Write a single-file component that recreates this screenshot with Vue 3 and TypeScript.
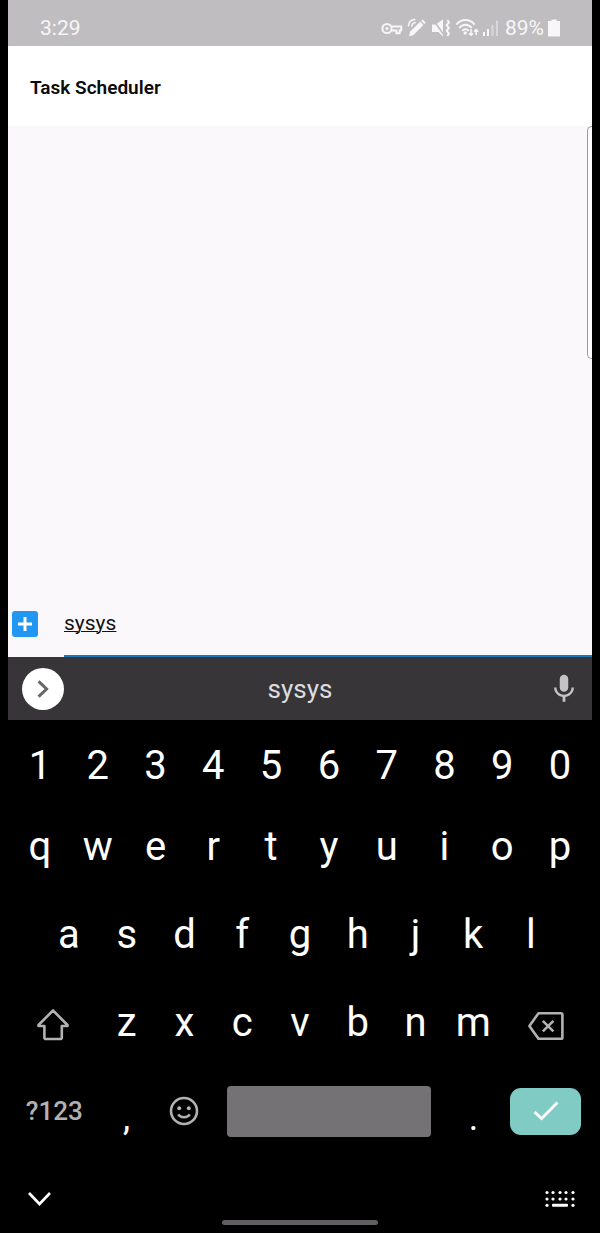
<script setup lang="ts">
import { ref } from 'vue'

const task = ref<string>('sysys')

const digits: string[] = [...'1234567890']
const topLetters: string[] = [...'qwertyuiop']
const homeLetters: string[] = [...'asdfghjkl']
const bottomLetters: string[] = [...'zxcvbnm']

const dotColumns: number[] = [3, 9, 16, 22, 29]

function type(char: string): void {
  task.value += char
}

function erase(): void {
  task.value = task.value.slice(0, -1)
}
</script>

<template>
  <div class="phone">
    <div class="status">
      <span class="clock">3:29</span>
      <div class="indicators">
        <svg width="22" height="20" viewBox="0 0 22 20" aria-hidden="true">
          <circle cx="6" cy="10.5" r="4.6" class="line" />
          <circle cx="6" cy="10.5" r="1.5" class="solid" />
          <path d="M10.5 8.4H20.2V12.4H18.6V15.2H15.4V12.4H10.5" class="line" />
        </svg>
        <svg width="20" height="20" viewBox="0 0 20 20" aria-hidden="true">
          <path d="M2 18.6L3.2 13.4L13.2 3.8L16.4 7L6.6 17Z M14.2 2.9L15.6 1.6L18.8 4.8L17.4 6.1Z" class="solid" />
          <path d="M1.4 8.4C1.6 4.4 4.4 1.8 8.4 1.6M4.6 8.8C4.8 6.4 6.4 4.8 8.8 4.6" class="line thin" />
        </svg>
        <svg width="20" height="20" viewBox="0 0 20 20" aria-hidden="true">
          <path d="M1 6.4H4.6L12 1.4V18.6L7.4 14H1Z" class="solid" />
          <path d="M2.4 2L13 17" class="slash" />
          <path d="M16.4 2L18 4.4L15.6 7.2L18 10L15.6 12.8L18 15.6L16.4 18" class="line" />
        </svg>
        <svg width="24" height="20" viewBox="0 0 24 20" aria-hidden="true">
          <path d="M1.4 6.6C6.4 .6 14.6 .6 19.6 6.6M4.2 9.8C7.8 5.6 13.2 5.6 16.8 9.8M7.2 12.8C9.2 10.6 11.8 10.6 13.8 12.8" class="line" />
          <circle cx="10.2" cy="15" r="1.7" class="solid" />
          <path d="M16 11V17M14 15.2L16 17.2L18 15.2M21.2 17V12M19.2 13.6L21.2 11.6L23.2 13.6" class="line thin" />
        </svg>
        <svg width="16" height="20" viewBox="0 0 16 20" aria-hidden="true">
          <path d="M0 14H2V18H0Z M4 11H6V18H4Z" class="solid" />
          <path d="M8.5 7H10.5V18H8.5Z M13 2.5H15V18H13Z" class="solid faint" />
        </svg>
        <span class="percent">89%</span>
        <svg width="12" height="20" viewBox="0 0 12 20" aria-hidden="true">
          <path d="M3.5 1.5H8.5V3H12V18.5H0V3H3.5Z" class="solid" />
        </svg>
      </div>
    </div>

    <header class="header">
      <h1>Task Scheduler</h1>
    </header>

    <main class="content">
      <div class="edge-handle"></div>
      <form class="entry" @submit.prevent>
        <button type="submit" class="add" aria-label="Add task">
          <svg width="26" height="26" viewBox="0 0 26 26" aria-hidden="true">
            <path d="M13 6V20M6 13H20" />
          </svg>
        </button>
        <input v-model="task" type="text" aria-label="Task name" autocomplete="off" spellcheck="false" />
      </form>
    </main>

    <section class="keyboard" aria-label="Keyboard">
      <div class="suggestions">
        <button type="button" class="expand" aria-label="More options">
          <svg width="42" height="42" viewBox="0 0 42 42" aria-hidden="true">
            <path d="M16.6 13.4L24.6 21L16.6 28.6" />
          </svg>
        </button>
        <button type="button" class="word">sysys</button>
        <button type="button" class="mic" aria-label="Voice input">
          <svg width="34" height="34" viewBox="0 0 24 24" aria-hidden="true">
            <path d="M12 14c1.66 0 3-1.34 3-3V5c0-1.66-1.34-3-3-3S9 3.34 9 5v6c0 1.66 1.34 3 3 3z" />
            <path d="M17.3 11c0 3-2.54 5.1-5.3 5.1S6.7 14 6.7 11H5c0 3.41 2.72 6.23 6 6.72V21h2v-3.28c3.28-.48 6-3.3 6-6.72h-1.7z" />
          </svg>
        </button>
      </div>

      <div class="row digits">
        <button v-for="c in digits" :key="c" type="button" class="key" @click="type(c)">{{ c }}</button>
      </div>
      <div class="row">
        <button v-for="c in topLetters" :key="c" type="button" class="key" @click="type(c)">{{ c }}</button>
      </div>
      <div class="row home">
        <button v-for="c in homeLetters" :key="c" type="button" class="key" @click="type(c)">{{ c }}</button>
      </div>
      <div class="row">
        <button type="button" class="key wide" aria-label="Shift">
          <svg width="40" height="40" viewBox="0 0 40 40" aria-hidden="true">
            <path d="M19 8.5L33.5 23V24H27.8V36.2L27 37H11.2L10.4 36.2V24H4.5V23Z" />
          </svg>
        </button>
        <button v-for="c in bottomLetters" :key="c" type="button" class="key" @click="type(c)">{{ c }}</button>
        <button type="button" class="key wide" aria-label="Backspace" @click="erase">
          <svg width="40" height="40" viewBox="0 0 40 40" aria-hidden="true">
            <path d="M12.5 11.2H35Q36.4 11.2 36.4 12.6V35.4Q36.4 36.8 35 36.8H12.5L3.4 24Z" />
            <path d="M16.8 18.8L27.4 29.4M27.4 18.8L16.8 29.4" />
          </svg>
        </button>
      </div>
      <div class="row controls">
        <button type="button" class="key symbols">?123</button>
        <button type="button" class="key mark" @click="type(',')">,</button>
        <button type="button" class="key" aria-label="Emoji">
          <svg width="40" height="40" viewBox="0 0 40 40" aria-hidden="true">
            <circle cx="20" cy="20" r="13" />
            <path d="M14.2 23.4C16.6 27.2 23.4 27.2 25.8 23.4" />
            <circle cx="15.2" cy="17.3" r="2" class="eye" />
            <circle cx="24.8" cy="17.3" r="2" class="eye" />
          </svg>
        </button>
        <button type="button" class="key space" aria-label="Space" @click="type(' ')">
          <span class="bar"></span>
        </button>
        <button type="button" class="key mark" @click="type('.')">.</button>
        <button type="button" class="key enter" aria-label="Done">
          <span class="cap">
            <svg width="28" height="28" viewBox="0 0 28 28" aria-hidden="true">
              <path d="M2.6 15L9.6 21.6L25.4 5.6" />
            </svg>
          </span>
        </button>
      </div>

      <nav class="nav" aria-label="System navigation">
        <button type="button" aria-label="Hide keyboard">
          <svg width="32" height="32" viewBox="0 0 32 32" aria-hidden="true">
            <path d="M5 10L15.5 21L26 10" class="chevron" />
          </svg>
        </button>
        <span class="pill"></span>
        <button type="button" aria-label="Switch keyboard">
          <svg width="32" height="32" viewBox="0 0 32 32" aria-hidden="true">
            <g v-for="x in dotColumns" :key="x">
              <circle :cx="x" cy="9.5" r="1.6" />
              <circle :cx="x" cy="16" r="1.6" />
            </g>
            <circle cx="3" cy="22.3" r="1.6" />
            <circle cx="29" cy="22.3" r="1.6" />
            <rect x="8" y="20.8" width="16" height="3" rx="1" />
          </svg>
        </button>
      </nav>
    </section>
  </div>
</template>

<style>
body {
  background: #000;
}
</style>

<style scoped>
.phone {
  display: flex;
  flex-direction: column;
  min-height: 100vh;
  box-sizing: border-box;
  padding: 0 8px;
  background: #000;
  font-family: Roboto, "Liberation Sans", sans-serif;
}

button {
  display: flex;
  align-items: center;
  justify-content: center;
  margin: 0;
  padding: 0;
  border: 0;
  background: none;
  color: inherit;
  font: inherit;
  cursor: pointer;
}

svg {
  display: block;
  flex: none;
}

.status {
  display: flex;
  align-items: center;
  justify-content: space-between;
  height: 46px;
  box-sizing: border-box;
  padding: 10px 32px 0;
  background: #c0bdc0;
  color: #f8f6f8;
  font-size: 21px;
}

.indicators {
  display: flex;
  align-items: center;
  gap: 4px;
}

.percent {
  margin-left: 2px;
}

.line {
  fill: none;
  stroke: #f8f6f8;
  stroke-width: 2;
}

.thin {
  stroke-width: 1.5;
}

.solid {
  fill: #f8f6f8;
}

.faint {
  opacity: 0.45;
}

.slash {
  fill: none;
  stroke: #c0bdc0;
  stroke-width: 1.5;
}

.header {
  display: flex;
  align-items: center;
  height: 80px;
  padding: 2px 22px 0;
  box-sizing: border-box;
  background: #fff;
}

h1 {
  margin: 0;
  color: #0c0b0c;
  font-size: 19px;
  font-weight: 600;
}

.content {
  display: flex;
  flex: 1;
  flex-direction: column;
  justify-content: space-between;
  background: #faf8fb;
}

.edge-handle {
  align-self: flex-end;
  width: 5px;
  height: 233px;
  box-sizing: border-box;
  border: 1px solid #9b999c;
  border-right: 0;
  border-radius: 6px 0 0 6px;
  background: #fdfcfe;
}

.entry {
  display: flex;
  align-items: center;
  gap: 26px;
  height: 67px;
  padding-left: 4px;
}

.add {
  border-radius: 3px;
  background: #2196f3;
}

.add path {
  fill: none;
  stroke: #fff;
  stroke-width: 3;
}

.entry input {
  flex: 1;
  align-self: stretch;
  min-width: 0;
  box-sizing: border-box;
  padding: 0;
  border: 0;
  border-bottom: 2px solid #1c76b8;
  border-radius: 0;
  outline: 0;
  background: none;
  color: #141314;
  font: inherit;
  font-size: 21px;
  text-decoration: underline;
  text-decoration-thickness: 1px;
  text-underline-offset: 1px;
}

.keyboard {
  color: #fff;
  font-size: 40px;
}

.suggestions {
  display: grid;
  grid-template-columns: 1fr auto 1fr;
  align-items: center;
  height: 63px;
  padding: 0 11px;
  background: #373537;
}

.expand {
  justify-self: start;
  margin-left: 3px;
  border-radius: 50%;
  background: #fff;
}

.expand path {
  fill: none;
  stroke: #69676a;
  stroke-width: 3;
}

.word {
  color: #dedcdf;
  font-size: 26px;
}

.mic {
  justify-self: end;
  fill: #c5c3c6;
}

.row {
  display: flex;
  height: 88px;
  padding: 0 3px;
}

.digits {
  height: 74px;
  padding-top: 8px;
}

.home {
  padding: 0 5.5%;
}

.key {
  flex: 1 1 0;
  min-width: 0;
}

.key svg {
  fill: none;
  stroke: #b3b1b4;
  stroke-width: 2.6;
  stroke-linejoin: round;
}

.wide {
  flex-grow: 1.5;
}

.controls {
  display: grid;
  grid-template-columns: 3fr 2fr 2fr 8fr 2fr 3fr;
  height: 86px;
  padding-top: 2px;
}

.symbols {
  color: #b3b1b4;
  font-size: 26px;
  font-weight: 500;
}

.mark {
  padding-top: 14px;
  font-size: 36px;
}

.key .eye {
  fill: #b3b1b4;
  stroke: none;
}

.space {
  padding: 0 14px;
}

.bar {
  flex: 1;
  height: 51px;
  border-radius: 4px;
  background: #747275;
}

.enter {
  padding: 0 8px;
}

.cap {
  display: flex;
  flex: 1;
  align-items: center;
  justify-content: center;
  height: 47px;
  border-radius: 11px;
  background: #80cbc4;
}

.enter svg {
  stroke: #fff;
  stroke-width: 2.8;
  stroke-linejoin: miter;
}

.nav {
  display: grid;
  grid-template-columns: 1fr 156px 1fr;
  height: 79px;
  box-sizing: border-box;
  padding: 29px 16px 8px;
}

.nav button {
  align-self: start;
  justify-self: start;
  fill: #fff;
}

.nav button:last-child {
  justify-self: end;
}

.chevron {
  fill: none;
  stroke: #fff;
  stroke-width: 2.6;
}

.pill {
  align-self: end;
  height: 5px;
  border-radius: 3px;
  background: #615f62;
}
</style>
